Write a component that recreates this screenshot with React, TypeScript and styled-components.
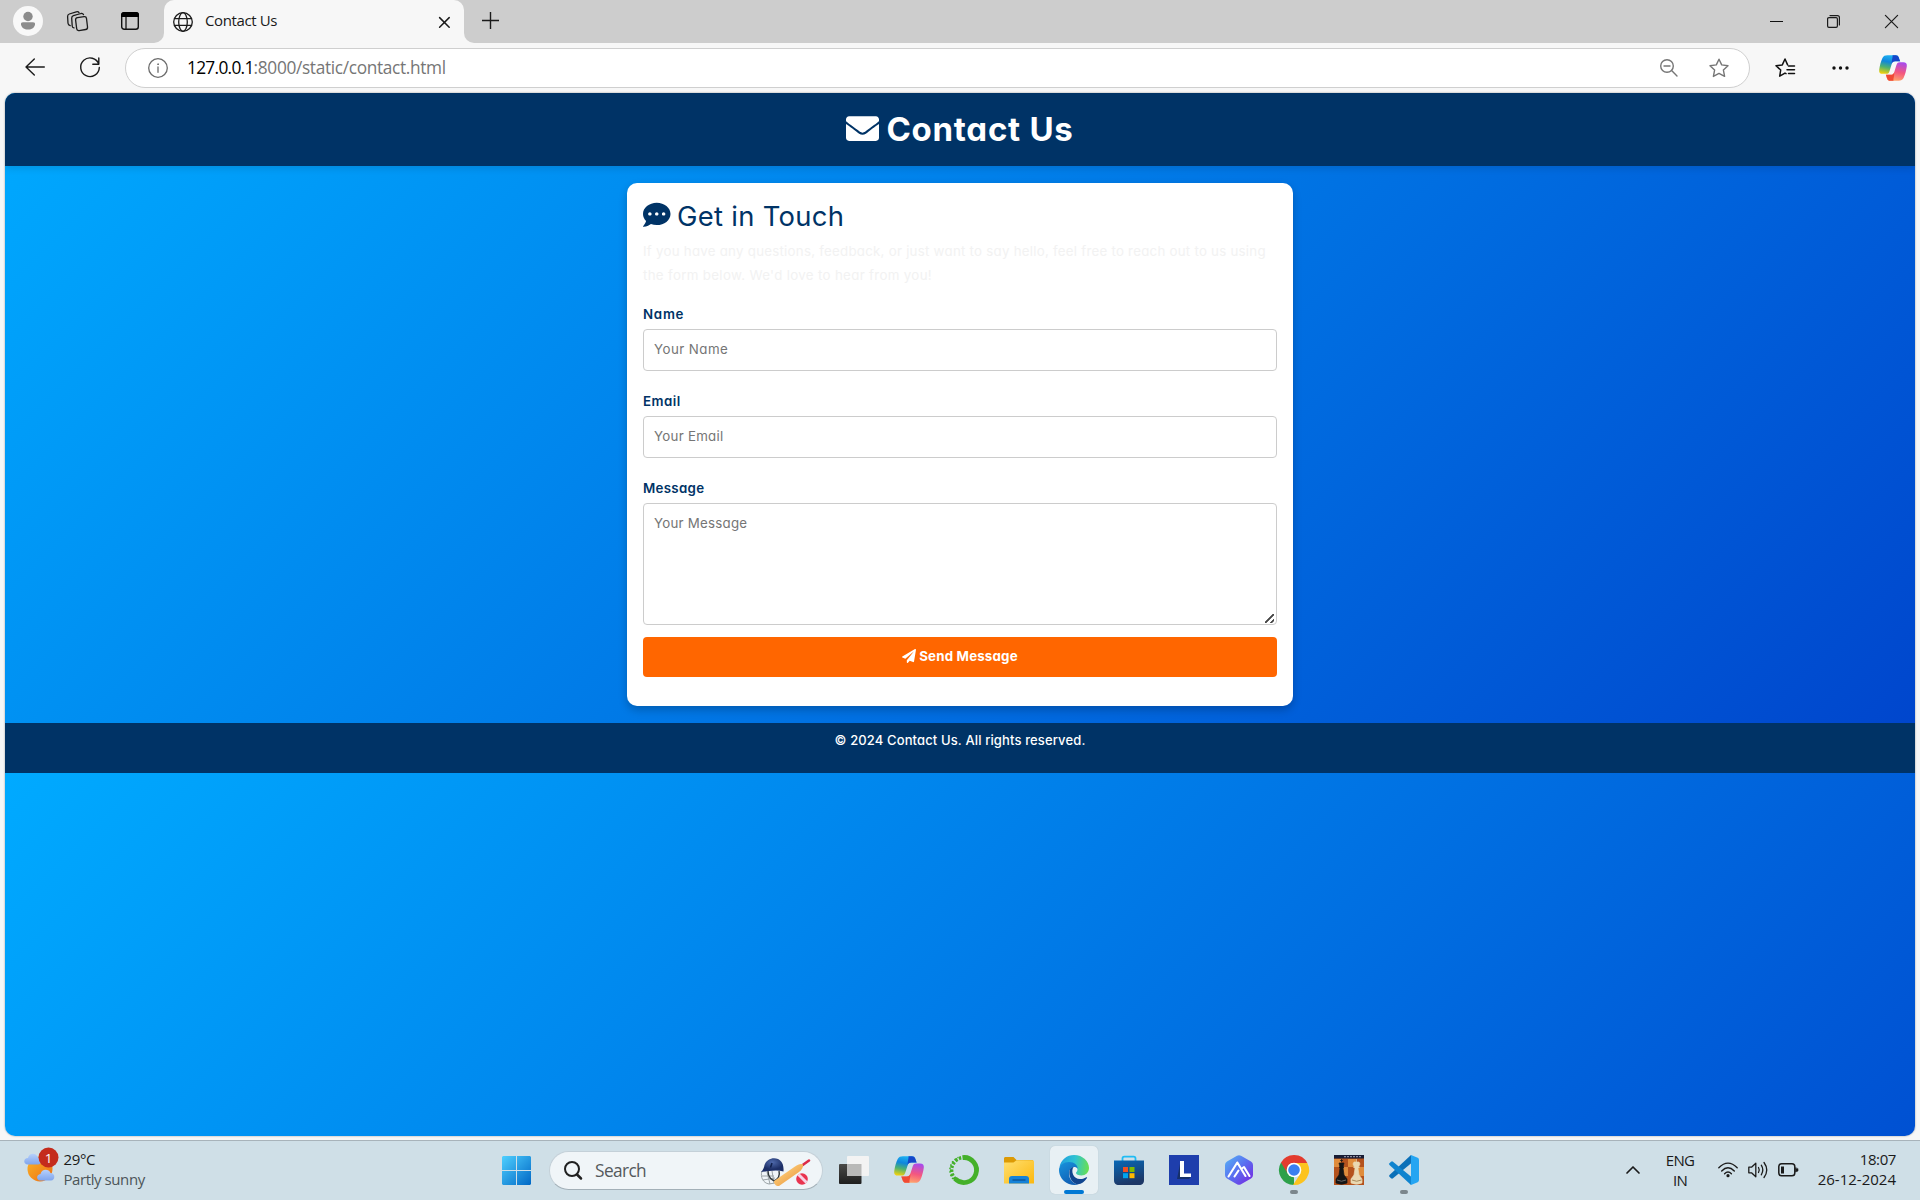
import React from "react";
import styled, { createGlobalStyle, css } from "styled-components";
import { FaEnvelope, FaCommentDots, FaPaperPlane } from "react-icons/fa";

const segoe = `"Segoe UI", "Open Sans", "Noto Sans", sans-serif`;
const poppins = `Inter, "Open Sans", sans-serif`;
const navy = "#003366";

const GlobalStyle = createGlobalStyle`
  *, *::before, *::after { box-sizing: border-box; }
  body { margin: 0; background: #f7f7f7; overflow: hidden; }
  svg { display: block; flex: none; }
`;

const Screen = styled.div`
  width: 1920px;
  height: 1200px;
  display: flex;
  flex-direction: column;
  background: #f7f7f7;
  overflow: hidden;
`;

const Icon = styled.svg<{ $ml?: number; $mt?: number; $mr?: number }>`
  margin-left: ${(p) => p.$ml ?? 0}px;
  margin-right: ${(p) => p.$mr ?? 0}px;
  margin-top: ${(p) => p.$mt ?? 0}px;
  overflow: visible;
`;

/* ---------- browser chrome ---------- */

const TitleBar = styled.div`
  height: 43px;
  display: flex;
  align-items: flex-start;
  background: #f7f7f7;
`;

const TitleSide = styled.div<{ $width?: number; $corner: "left" | "right" }>`
  ${(p) => (p.$width ? `width: ${p.$width}px; flex: none;` : "flex: 1;")}
  height: 43px;
  display: flex;
  align-items: flex-start;
  background: #cdcdcd;
  border-radius: ${(p) => (p.$corner === "left" ? "0 0 10px 0" : "0 0 0 10px")};
`;

const TabShell = styled.div`
  width: 300px;
  height: 43px;
  flex: none;
  background: #cdcdcd;
`;

const Tab = styled.div`
  height: 43px;
  display: flex;
  align-items: flex-start;
  padding-left: 9px;
  background: #f7f7f7;
  border-radius: 10px 10px 0 0;
`;

const UiText = styled.span<{ $size: number; $lh: number; $ls?: number; $color?: string; $mt?: number; $ml?: number }>`
  font-family: ${segoe};
  font-size: ${(p) => p.$size}px;
  line-height: ${(p) => p.$lh}px;
  letter-spacing: ${(p) => p.$ls ?? 0}px;
  color: ${(p) => p.$color ?? "#1a1a1a"};
  margin-top: ${(p) => p.$mt ?? 0}px;
  margin-left: ${(p) => p.$ml ?? 0}px;
  white-space: pre;
`;

const Spacer = styled.div<{ $width?: number }>`
  flex: ${(p) => (p.$width ? `0 0 ${p.$width}px` : "1")};
`;

const ToolBar = styled.div`
  height: 50px;
  display: flex;
  align-items: flex-start;
  padding-top: 5px;
  background: #f7f7f7;
`;

const AddressBar = styled.div`
  width: 1625px;
  height: 40px;
  margin-left: 25px;
  flex: none;
  display: flex;
  align-items: flex-start;
  background: #fff;
  border: 1px solid #cfcfcf;
  border-radius: 20px;
`;

/* ---------- web page ---------- */

const Viewport = styled.main`
  height: 1043px;
  flex: none;
  margin: 0 5px;
  border-radius: 10px;
  overflow: hidden;
  background: linear-gradient(135deg, #00aaff, #0044cc) 0 0 / 100% 680px;
  box-shadow: 0 0 2px rgba(0, 0, 0, 0.4);
`;

const PageHeader = styled.header`
  height: 73px;
  display: flex;
  justify-content: center;
  background: ${navy};
  box-shadow: 0 3px 7px rgba(0, 0, 0, 0.1);
  color: #fff;

  svg { margin-top: 19px; }
`;

const webText = css<{ $ls?: number }>`
  font-family: ${poppins};
  font-feature-settings: "cv11";
  letter-spacing: ${(p) => p.$ls ?? 0}px;
  white-space: nowrap;
`;

const Title = styled.h1<{ $ls?: number }>`
  ${webText}
  margin: 16px 0 0 7px;
  font-size: 33px;
  line-height: 40px;
  font-weight: 650;
`;

const Card = styled.section`
  width: 666px;
  height: 523px;
  margin: 17px auto;
  padding: 16px;
  display: flex;
  flex-direction: column;
  background: #fff;
  border-radius: 10px;
  box-shadow: 0 4px 9px rgba(0, 0, 0, 0.22);
`;

const CardHeading = styled.div`
  display: flex;
  height: 40px;
  color: ${navy};

  svg { margin-top: 2px; }
`;

const CardTitle = styled.h2<{ $ls?: number }>`
  ${webText}
  margin: -1px 0 0 6.5px;
  font-size: 27.4px;
  line-height: 36px;
  font-weight: 400;
`;

const Intro = styled.p`
  height: 62px;
  margin: 0;
`;

const IntroLine = styled.span<{ $ls?: number }>`
  ${webText}
  display: block;
  font-size: 13.3px;
  line-height: 24px;
  color: #f2f2f2;
`;

const Label = styled.label<{ $ls?: number }>`
  ${webText}
  height: 28px;
  font-size: 13.3px;
  line-height: 26px;
  font-weight: 600;
  color: ${navy};
`;

const fieldStyle = css`
  ${webText}
  width: 634px;
  padding: 0 10px 2px;
  border: 1px solid #ccc;
  border-radius: 4px;
  background: #fff;
  font-size: 13.3px;
  outline: none;
  &::placeholder { color: #757575; opacity: 1; }
`;

const Input = styled.input<{ $ls?: number }>`
  ${fieldStyle}
  height: 42px;
  margin: 0 0 17px;
`;

const TextArea = styled.textarea<{ $ls?: number }>`
  ${fieldStyle}
  height: 122px;
  margin: 0;
  padding-top: 9px;
  line-height: 20px;
  resize: vertical;

  &::-webkit-resizer {
    background: linear-gradient(
        135deg,
        transparent 42%,
        #444 45% 55%,
        transparent 58% 76%,
        #444 78% 88%,
        transparent 90%
      )
      4px 5px / 9px 9px no-repeat;
  }
`;

const SendButton = styled.button<{ $ls?: number }>`
  ${webText}
  width: 634px;
  height: 40px;
  margin: 12px 0 0;
  padding: 0 0 2px;
  display: flex;
  align-items: center;
  justify-content: center;
  gap: 3px;
  border: 0;
  border-radius: 4px;
  background: #ff6600;
  color: #fff;
  font-size: 13.3px;
  font-weight: 700;
`;

const PageFooter = styled.footer<{ $ls?: number }>`
  ${webText}
  height: 50px;
  padding-top: 7px;
  background: ${navy};
  color: #fff;
  text-align: center;
  font-size: 13px;
  line-height: 20px;
  font-weight: 500;
`;

/* ---------- task bar ---------- */

const TaskBar = styled.div`
  height: 60px;
  margin-top: 4px;
  flex: none;
  display: flex;
  align-items: flex-start;
  border-top: 1px solid #a8b3ba;
  background: #cfdfe7;
`;

const Weather = styled.div`
  width: 490px;
  display: flex;
  padding-left: 24px;
`;

const TextColumn = styled.div<{ $align?: string; $width?: number; $ml?: number }>`
  display: flex;
  flex-direction: column;
  align-items: ${(p) => p.$align ?? "flex-start"};
  margin-left: ${(p) => p.$ml ?? 0}px;
  margin-top: 8px;
  width: ${(p) => (p.$width ? `${p.$width}px` : "auto")};
`;

const BadgeCount = styled.text`
  font-family: ${segoe};
  font-size: 13.5px;
  fill: #fff;
`;

const SearchBox = styled.div`
  width: 274px;
  height: 39px;
  margin: 10px 7px 0 18px;
  display: flex;
  border: 1px solid #c4d0d8;
  border-bottom-color: #a3b0b8;
  border-radius: 20px;
  background: #f0f5f8;
`;

const Apps = styled.div`
  display: flex;
  gap: 7px;
  padding-top: 5px;
`;

const AppCell = styled.div<{ $active?: boolean }>`
  width: 48px;
  height: 48px;
  padding-top: 9px;
  display: flex;
  flex-direction: column;
  align-items: center;
  border-radius: 5px;
  ${(p) => p.$active && "background: #e8f0f4; box-shadow: 0 0 1px #a9b8c1;"}
`;

const Indicator = styled.div<{ $active?: boolean }>`
  width: ${(p) => (p.$active ? 20 : 8)}px;
  height: 4px;
  margin-top: 5px;
  border-radius: 2px;
  background: ${(p) => (p.$active ? "#0078d4" : "#7b868c")};
`;

const leaf =
  "M9 .2H18C21.5 .2 21.3 3.5 22.7 6.5H17.3C15.2 6.5 14.2 7.4 13.6 9.4L11.5 16C10.8 18.5 10 19.6 7.6 19.6H4C1.2 19.6 -.2 18.2 .2 15.2C.8 11 2 6.5 3.7 3C4.9 .9 6.3 .2 9 .2z";
const leafTip =
  "M14.5 .2H18C21.5 .2 21.3 3.5 22.7 6.5H17.3C15.2 6.5 14.2 7.4 13.6 9.4C13.4 5 15 2 14.5 .2z";

const Copilot = ({ id, w, h, ml, mt }: { id: string; w: number; h: number; ml?: number; mt?: number }) => (
  <Icon width={w} height={h} viewBox="0 0 30 27" preserveAspectRatio="none" $ml={ml} $mt={mt}>
    <defs>
      <linearGradient id={`${id}a`} x1="0.5" y1="0" x2="0.25" y2="1">
        <stop offset="0" stopColor="#1fb3f2" />
        <stop offset="0.35" stopColor="#0f86dd" />
        <stop offset="0.65" stopColor="#4fb26f" />
        <stop offset="1" stopColor="#f3d10b" />
      </linearGradient>
      <linearGradient id={`${id}b`} x1="0.5" y1="0" x2="0.25" y2="1">
        <stop offset="0" stopColor="#ffa36c" />
        <stop offset="0.45" stopColor="#f4577f" />
        <stop offset="1" stopColor="#a54af0" />
      </linearGradient>
    </defs>
    <path d={leaf} fill={`url(#${id}a)`} />
    <path d={leafTip} fill="#1546c9" />
    <g transform="rotate(180 15 13.5)">
      <path d={leaf} fill={`url(#${id}b)`} />
      <path d={leafTip} fill="#f04a35" />
    </g>
  </Icon>
);

const line = { fill: "none", stroke: "#1b1b1b", strokeWidth: 1.4, strokeLinecap: "round" as const, strokeLinejoin: "round" as const };

const starPath = "M10 1.2L12.7 6.9L19 7.7L14.4 12.1L15.6 18.4L10 15.4L4.4 18.4L5.6 12.1L1 7.7L7.3 6.9z";

function Chrome() {
  return (
    <>
      <TitleBar>
        <TitleSide $width={164} $corner="left">
          <Icon width="30" height="30" $ml={13} $mt={6}>
            <circle cx="15" cy="15" r="15" fill="#f8f8f8" />
            <circle cx="15" cy="10.5" r="4.7" fill="#8c8c8c" />
            <path d="M10 16.2H20C21.5 16.2 22.2 17 22 18.4C21.5 21.5 19 23.5 15 23.5S8.500 21.5 8 18.4C7.8 17 8.5 16.2 10 16.2z" fill="#8c8c8c" />
          </Icon>
          <Icon width="21" height="20" $ml={24} $mt={11} {...line} strokeWidth="1.3">
            <rect x="9.5" y="6" width="11" height="13" rx="2.2" transform="rotate(-9 15 12.5) skewX(-2)" />
            <path d="M7 16.9C5.9 16.7 5.3 16 5.2 15L4.7 7.2C4.6 5.9 5.2 5.1 6.4 4.7L14 2.5C15.2 2.2 16 2.6 16.5 3.6" />
            <path d="M3.2 14.6C1.8 14.3 1.1 13.6 1 12.3L.6 5.7C.5 4.4 1.1 3.4 2.3 3L9.3 .9C10.6 .5 11.5 .8 12 1.6" />
          </Icon>
          <Icon width="18" height="18" $ml={33} $mt={12}>
            <rect x=".7" y=".7" width="16.6" height="16.6" rx="2.5" fill="none" stroke="#111" strokeWidth="1.4" />
            <path d="M0 5V3C0 1 1 0 3 0H15C17 0 18 1 18 3V5z" fill="#000" />
            <path d="M5 5V17" stroke="#111" strokeWidth="1.3" />
          </Icon>
        </TitleSide>
        <TabShell>
          <Tab>
            <Icon width="20" height="20" $mt={12} {...line} strokeWidth="1.3">
              <circle cx="10" cy="10" r="9.3" />
              <ellipse cx="10" cy="10" rx="4.3" ry="9.3" />
              <path d="M1.5 6.7H18.5M1.5 13.3H18.5" />
            </Icon>
            <UiText $size={15} $lh={20} $ls={-0.38} $mt={10} $ml={12}>Contact Us</UiText>
            <Spacer />
            <Icon width="11" height="11" $mt={16.5} $mr={14} {...line} strokeWidth="1.5">
              <path d="M.6 .6L10.2 10.2M10.2 .6L.6 10.2" />
            </Icon>
          </Tab>
        </TabShell>
        <TitleSide $corner="right">
          <Icon width="17" height="17" $ml={18} $mt={12} {...line} strokeLinecap="butt">
            <path d="M8.5 0V17M0 8.5H17" />
          </Icon>
          <Spacer />
          <Icon width="13" height="13" $mt={15}>
            <path d="M0 6.5H13" stroke="#111" strokeWidth="1" />
          </Icon>
          <Icon width="13" height="13" $ml={44} $mt={15} {...line} strokeWidth="1.2">
            <rect x=".6" y="2.6" width="9.8" height="9.8" rx="1.3" />
            <path d="M3 .6H10.5C11.7 .6 12.4 1.3 12.4 2.5V10" />
          </Icon>
          <Icon width="13" height="13" $ml={45} $mt={15} $mr={22} {...line} strokeWidth="1.2">
            <path d="M.4 .4L12.6 12.6M12.6 .4L.4 12.6" />
          </Icon>
        </TitleSide>
      </TitleBar>
      <ToolBar>
        <Icon width="20" height="18" $ml={25} $mt={10} {...line}>
          <path d="M19.3 9H1M9.3 1L1 9L9.3 17" />
        </Icon>
        <Icon width="20" height="21" $ml={35} $mt={9} {...line}>
          <path d="M18.8 7.2A9.3 9.3 0 1 0 19.3 10.5M18.8 1V7.2H12.8" />
        </Icon>
        <AddressBar>
          <Icon width="20" height="20" $ml={21.5} $mt={9} {...line} stroke="#6b6b6b" strokeWidth="1.3">
            <circle cx="10" cy="10" r="9.3" />
            <path d="M10 9V14.3" />
            <circle cx="10" cy="6.2" r=".5" fill="#6b6b6b" strokeWidth=".8" />
          </Icon>
          <UiText $size={17.3} $lh={24} $ls={-0.7} $mt={7} $ml={19.5} $color="#000">127.0.0.1</UiText>
          <UiText $size={17.3} $lh={24} $ls={-0.34} $mt={7} $color="#767676">:8000/static/contact.html</UiText>
          <Spacer />
          <Icon width="18" height="18" $mt={10} {...line} stroke="#767676">
            <circle cx="7" cy="7" r="6.3" />
            <path d="M11.6 11.6L17 17M4 7H10" />
          </Icon>
          <Icon width="20" height="20" $ml={31} $mt={9} $mr={20} {...line} stroke="#767676">
            <path d={starPath} />
          </Icon>
        </AddressBar>
        <Icon width="20" height="20" $ml={25} $mt={10} {...line} stroke="#111" strokeWidth="1.5">
          <path d="M11 15.6L10 15.1L4.7 18.2L5.7 12L1 7.7L7.3 6.9L10 1L12.6 6.9" />
          <path d="M13.5 8H19.5M12 11.7H19.5M13.5 15.6H19.5" />
        </Icon>
        <Icon width="17" height="4" $ml={36.5} $mt={17.5} fill="#111">
          <circle cx="2" cy="2" r="1.7" />
          <circle cx="8.5" cy="2" r="1.7" />
          <circle cx="15" cy="2" r="1.7" />
        </Icon>
        <Copilot id="top" w={28} h={26} ml={30.5} mt={7} />
      </ToolBar>
    </>
  );
}

function WebPage() {
  return (
    <Viewport>
      <PageHeader>
        <FaEnvelope size={33} />
        <Title $ls={0.75}>Contact Us</Title>
      </PageHeader>
      <Card>
        <CardHeading>
          <FaCommentDots size={27.5} />
          <CardTitle $ls={0.3}>Get in Touch</CardTitle>
        </CardHeading>
        <Intro>
          <IntroLine $ls={0.25}>
            If you have any questions, feedback, or just want to say hello, feel free to reach out to us using
          </IntroLine>
          <IntroLine $ls={0.33}>the form below. We'd love to hear from you!</IntroLine>
        </Intro>
        <Label htmlFor="name" $ls={0.75}>Name</Label>
        <Input id="name" placeholder="Your Name" $ls={0.45} />
        <Label htmlFor="email" $ls={0.5}>Email</Label>
        <Input id="email" placeholder="Your Email" $ls={0.27} />
        <Label htmlFor="message" $ls={0.3}>Message</Label>
        <TextArea id="message" placeholder="Your Message" $ls={0.24} />
        <SendButton $ls={0.18}>
          <FaPaperPlane size={14} />
          Send Message
        </SendButton>
      </Card>
      <PageFooter $ls={0.13}>© 2024 Contact Us. All rights reserved.</PageFooter>
    </Viewport>
  );
}

function WindowsTaskBar() {
  return (
    <TaskBar>
      <Weather>
        <Icon width="32" height="38" $mt={5}>
          <defs>
            <linearGradient id="sun" x1="0" y1="0" x2="1" y2="1">
              <stop offset="0" stopColor="#fbb526" />
              <stop offset="1" stopColor="#ec6d16" />
            </linearGradient>
            <linearGradient id="cloud" x1="0" y1="0" x2="0" y2="1">
              <stop offset="0" stopColor="#b6d0fb" />
              <stop offset="1" stopColor="#7fa5ee" />
            </linearGradient>
          </defs>
          <circle cx="16" cy="23" r="12.5" fill="url(#sun)" />
          <path d="M4 18.5C-1 18.5 -1 12 4 12C5 6.5 12 6.5 13.5 11C18 11 18.5 18.5 14 18.5z" fill="url(#cloud)" />
          <path d="M16.5 34.5C12 34.5 12 28.5 16.5 28C17.5 22.5 25 22.5 26.5 27C31.5 27 31.5 34.5 27 34.5z" fill="url(#cloud)" />
          <circle cx="24.5" cy="11.5" r="10" fill="#c42b1c" />
          <BadgeCount x="24.5" y="16.5" textAnchor="middle">1</BadgeCount>
        </Icon>
        <TextColumn $ml={7.5}>
          <UiText $size={15} $lh={20} $ls={-0.38}>29°C</UiText>
          <UiText $size={15} $lh={20} $ls={-0.42} $color="#4c5558">Partly sunny</UiText>
        </TextColumn>
      </Weather>
      <Icon width="29" height="29" $ml={12} $mt={15}>
        <defs>
          <linearGradient id="win" gradientUnits="userSpaceOnUse" x1="0" y1="0" x2="29" y2="29">
            <stop offset="0" stopColor="#4fd0ff" />
            <stop offset="1" stopColor="#0067c5" />
          </linearGradient>
        </defs>
        <path d="M1 0H14V14H0V1zM15 0H28L29 1V14H15zM0 15H14V29H1L0 28zM15 15H29V28L28 29H15z" fill="url(#win)" />
      </Icon>
      <SearchBox>
        <Icon width="18" height="19" $ml={13.5} $mt={9} fill="none" stroke="#202020" strokeWidth="2" strokeLinecap="round">
          <circle cx="8" cy="8" r="7" />
          <path d="M13 13.5L17 17.5" strokeWidth="2.5" />
        </Icon>
        <UiText $size={17.3} $lh={24} $ls={-0.6} $mt={7} $ml={13.5} $color="#54595c">Search</UiText>
        <Spacer />
        <Icon width="50" height="30" $mt={5} $mr={12}>
          <defs>
            <linearGradient id="bat" x1="0" y1="0" x2="1" y2="1">
              <stop offset="0.3" stopColor="#fbc873" />
              <stop offset="1" stopColor="#e58b33" />
            </linearGradient>
            <radialGradient id="helmet" cx="0.5" cy="0.3">
              <stop offset="0" stopColor="#4f6aac" />
              <stop offset="1" stopColor="#1d2f67" />
            </radialGradient>
          </defs>
          <path d="M2 14C0 20 3 26 9 27L15 26M2 19H14M3 23L15 21M7 15L10 27M12 14L14 26" fill="none" stroke="#9aa2a5" strokeWidth="1" />
          <path d="M8 14C8 20 12 24 18 25M19 14C20 18 18 22 14 24" fill="none" stroke="#30373a" strokeWidth="1.4" />
          <path d="M1 15C3 13 4 11 4.5 8C6.5 2 13 0 18 2C22 4 24 8 23.5 14.5C17 12.5 9 14 1 15z" fill="url(#helmet)" />
          <path d="M12 6L10.5 10.5" stroke="#10204c" strokeWidth="1.5" />
          <path d="M49 3.5L42 8.5" stroke="#db2c49" strokeWidth="2.6" strokeLinecap="round" />
          <path d="M14 24L35 9.5C38 7.5 40.5 6.5 43 7.5C43.5 10 42 12.5 39 15L19 29C16.5 29.5 13.5 27 14 24z" fill="url(#bat)" />
          <circle cx="42" cy="22" r="5.8" fill="#e9344f" />
          <path d="M38.5 17.5L46.5 25.5" stroke="#f7d3e6" strokeWidth="3" />
        </Icon>
      </SearchBox>
      <Apps>
        <AppCell>
          <Icon width="30" height="30">
            <defs>
              <linearGradient id="tv" x1="0" y1="0" x2="0" y2="1">
                <stop offset="0" stopColor="#4a4a48" />
                <stop offset="1" stopColor="#1e1e1e" />
              </linearGradient>
            </defs>
            <rect x="0" y="9" width="22.5" height="20" rx="1" fill="url(#tv)" />
            <rect x="8" y="1" width="22" height="20" rx="1" fill="#f3f3f3" />
            <path d="M8 9H22.5V21H8z" fill="#b9b9b8" />
          </Icon>
        </AppCell>
        <AppCell><Copilot id="task" w={30} h={27} mt={1} /></AppCell>
        <AppCell>
          <Icon width="30" height="30" fill="none" stroke="#44b02a">
            <path d="M13.5 2.6A12.5 12.5 0 1 1 6 23.7" strokeWidth="4.8" />
            <path d="M6.5 24A12.5 12.5 0 0 1 13 2.6" strokeWidth="3.5" strokeDasharray="2.5 1.5" />
            <path d="M4 24A14 14 0 0 1 9 2.5" strokeWidth="1.5" strokeDasharray="1.5 2" />
          </Icon>
        </AppCell>
        <AppCell>
          <Icon width="30" height="30">
            <defs>
              <linearGradient id="fold" x1="0" y1="0" x2="1" y2="1">
                <stop offset="0" stopColor="#ffdf70" />
                <stop offset="1" stopColor="#fbb80f" />
              </linearGradient>
            </defs>
            <path d="M0 10V3.5C0 2.5 .7 2 1.5 2H9.5L12.5 5H29V10z" fill="#dc9a05" />
            <path d="M0 7.5H9.5L12.5 5.2H28.5C29.5 5.2 30 5.8 30 6.8V28.5H0z" fill="url(#fold)" />
            <path d="M5 28.5V24C5 22 6 21 8 21H22C24 21 25 22 25 24V28.5z" fill="#1582d8" />
            <path d="M8.5 25H21.5" stroke="#0b4f91" strokeWidth="1.3" />
          </Icon>
        </AppCell>
        <AppCell $active>
          <Icon width="30" height="30">
            <defs>
              <linearGradient id="edgeTop" x1="0" y1="0.5" x2="1" y2="0.6">
                <stop offset="0" stopColor="#1f9fe0" />
                <stop offset="0.5" stopColor="#2fc3d2" />
                <stop offset="1" stopColor="#6be04e" />
              </linearGradient>
              <linearGradient id="edgeMid" x1="0" y1="0" x2="0.5" y2="1">
                <stop offset="0" stopColor="#1893dd" />
                <stop offset="1" stopColor="#1160b5" />
              </linearGradient>
            </defs>
            <path d="M.5 12C2 4.5 8 0 15 0C24 0 30 6.5 30 13C30 17.5 26.5 20.5 22.5 20.5C19.5 20.5 17 19.5 17 18C17 17 18.5 16.5 18.5 14.5C18.5 11 15 8.5 11 8.5C6 8.5 2 10.5 .5 12z" fill="url(#edgeTop)" />
            <path d="M0 15C0 10 5 7 10 7C15.5 7 19 10.5 18.7 14C18 12.5 16.5 12 15 12C12 12 10 15 10 18.5C10 24 14 29 19.5 29.3C17 30.3 13 30.2 10 29C4 26.7 0 21 0 15z" fill="url(#edgeMid)" />
            <path d="M10.3 17C10.5 13.5 12.5 12 14.5 12C11.5 16.5 14.5 24 21 24C24 24 26 23 27.5 22.2C28 22 28.3 22.5 28 23C25.5 27 22.5 28.8 19 29.3C14 28.8 10 23.5 10.3 17z" fill="#11458f" />
          </Icon>
          <Indicator $active />
        </AppCell>
        <AppCell>
          <Icon width="30" height="30">
            <defs>
              <linearGradient id="store" x1="0" y1="0" x2="0.3" y2="1">
                <stop offset="0" stopColor="#0868b6" />
                <stop offset="1" stopColor="#1d3766" />
              </linearGradient>
            </defs>
            <path d="M8.5 7V3.5C8.5 2.3 9.2 1.7 10.3 1.7H19.7C20.8 1.7 21.5 2.3 21.5 3.5V7" fill="none" stroke="#1fbcf4" strokeWidth="1.8" />
            <path d="M0 5.5H30V25C30 28.5 28.5 30 25 30H5C1.5 30 0 28.5 0 25z" fill="url(#store)" />
            <path d="M9 12H14V17H9z" fill="#f25022" />
            <path d="M15.5 12H20.5V17H15.5z" fill="#7fba00" />
            <path d="M9 18.2H14V23.2H9z" fill="#00a4ef" />
            <path d="M15.5 18.2H20.5V23.2H15.5z" fill="#ffb900" />
          </Icon>
        </AppCell>
        <AppCell>
          <Icon width="30" height="30">
            <rect width="30" height="30" fill="#1e3eac" />
            <path d="M11 9L8 24H20L22 22L11 20z" fill="#16306a" />
            <path d="M11 6H15V18.5H22V22H11z" fill="#fff" />
          </Icon>
        </AppCell>
        <AppCell>
          <Icon width="30" height="30">
            <defs>
              <linearGradient id="hex" x1="0" y1="0" x2="1" y2="1">
                <stop offset="0" stopColor="#55b5f5" />
                <stop offset="0.5" stopColor="#5a6df0" />
                <stop offset="1" stopColor="#7a1fe0" />
              </linearGradient>
            </defs>
            <path d="M13 .8Q15 -.4 17 .8L27 6.5Q29 7.6 29 10V20Q29 22.4 27 23.5L17 29.2Q15 30.4 13 29.2L3 23.5Q1 22.4 1 20V10Q1 7.6 3 6.5z" fill="url(#hex)" />
            <path d="M4.5 21.5L13.3 7.5L21.5 21M10.5 21.5L14.5 15.5M18.5 13L20 12L25.5 21" fill="none" stroke="#fff" strokeWidth="2.1" strokeLinejoin="round" strokeLinecap="round" />
          </Icon>
        </AppCell>
        <AppCell>
          <Icon width="30" height="30">
            <path d="M15 15L15 30A15 15 0 0 1 2 7.5z" fill="#2da04a" />
            <path d="M15 8H28.3A15 15 0 0 1 14 30L21.5 18.5z" fill="#fcc31e" />
            <path d="M2 7.5A15 15 0 0 1 28.3 8H15A7 7 0 0 0 8.7 18.7z" fill="#e33b2e" />
            <circle cx="15" cy="15" r="7.3" fill="#fff" />
            <circle cx="15" cy="15" r="5.8" fill="#3a7ff0" />
          </Icon>
          <Indicator />
        </AppCell>
        <AppCell>
          <Icon width="30" height="30">
            <rect width="30" height="30" fill="#b4521d" />
            <path d="M0 4H7V12H0zM14 4H22V12H14zM7 12H14V21H7zM22 12H30V21H22z" fill="#e08c3c" />
            <rect width="30" height="3.5" fill="#191d35" />
            <path d="M10 1.7H28" stroke="#aaa7b5" strokeWidth="1" strokeDasharray="2 1" />
            <path d="M7.5 4V7M6 5.5H9M5 8H10L9 12H10L9 13L10 20L13 24V28Q7.500 30.500 2 28V24L5 20L6 13L5 12H6z" fill="#151515" stroke="#151515" strokeWidth=".7" />
            <path d="M22.500 4V7M20 7H25L26 9L24.500 12H25.500L24 13.500L25 20L28 24V28Q22.500 30.500 17 28V24L20 20L21 13.500L19.500 12H20.500L19 9z" fill="#ead9b3" stroke="#ead9b3" strokeWidth=".7" />
            <path d="M3 25Q7.5 27.5 12 25" fill="none" stroke="#666" />
            <path d="M18 25Q22.5 27.5 27.5 25" fill="none" stroke="#a8895b" />
          </Icon>
        </AppCell>
        <AppCell>
          <Icon width="30" height="30">
            <path d="M22 0L22.5 8L4 23.3Q3 24 2 23.2L.5 21.8Q-.4 20.9 .5 20z" fill="#0b70b8" />
            <path d="M22 30L22.5 22L4 6.7Q3 6 2 6.8L.5 8.2Q-.4 9.1 .5 10z" fill="#0f84cf" />
            <path d="M22 0L28.7 2.8Q30 3.4 30 5V25Q30 26.6 28.7 27.2L22 30z" fill="#25a5f2" />
          </Icon>
          <Indicator />
        </AppCell>
      </Apps>
      <Spacer />
      <Icon width="14" height="8" $mt={25} {...line} strokeWidth="1.7">
        <path d="M1 7L7 1L13 7" />
      </Icon>
      <TextColumn $align="center" $width={30} $ml={25}>
        <UiText $size={15} $lh={20} $ls={-0.75} $mt={1}>ENG</UiText>
        <UiText $size={15} $lh={20} $ls={-0.7}>IN</UiText>
      </TextColumn>
      <Icon width="20" height="16" $ml={23} $mt={21} {...line}>
        <path d="M.8 5.8Q10 -3.5 19.2 5.8M3.7 8.9Q10 2.5 16.3 8.9M6.6 11.7Q10 8.5 13.4 11.7" />
        <circle cx="10" cy="13.7" r="1.6" fill="#1b1b1b" stroke="none" />
      </Icon>
      <Icon width="20" height="18" $ml={10} $mt={20} {...line} strokeWidth="1.3">
        <path d="M.8 6.2H3.5L7.8 2.2V15.8L3.5 11.8H.8z" />
        <path d="M10.5 6.5Q12 9 10.5 11.5M13.3 4.2Q16.3 9 13.3 13.8M16 1.5Q21.5 9 16 16.5" />
      </Icon>
      <Icon width="20" height="14" $ml={10} $mt={22} {...line} strokeWidth="1.5">
        <rect x=".8" y=".8" width="16" height="12" rx="2.8" />
        <path d="M3 3.5H6V10.5H3z" fill="#1b1b1b" stroke="none" />
        <path d="M17.5 5V9L20 8V6z" fill="#1b1b1b" strokeWidth=".6" />
      </Icon>
      <TextColumn $align="flex-end" $width={98}>
        <UiText $size={15} $lh={20} $ls={-0.4}>18:07</UiText>
        <UiText $size={15} $lh={20}>26-12-2024</UiText>
      </TextColumn>
      <Spacer $width={24} />
    </TaskBar>
  );
}

export default function App() {
  return (
    <Screen>
      <GlobalStyle />
      <Chrome />
      <WebPage />
      <WindowsTaskBar />
    </Screen>
  );
}
